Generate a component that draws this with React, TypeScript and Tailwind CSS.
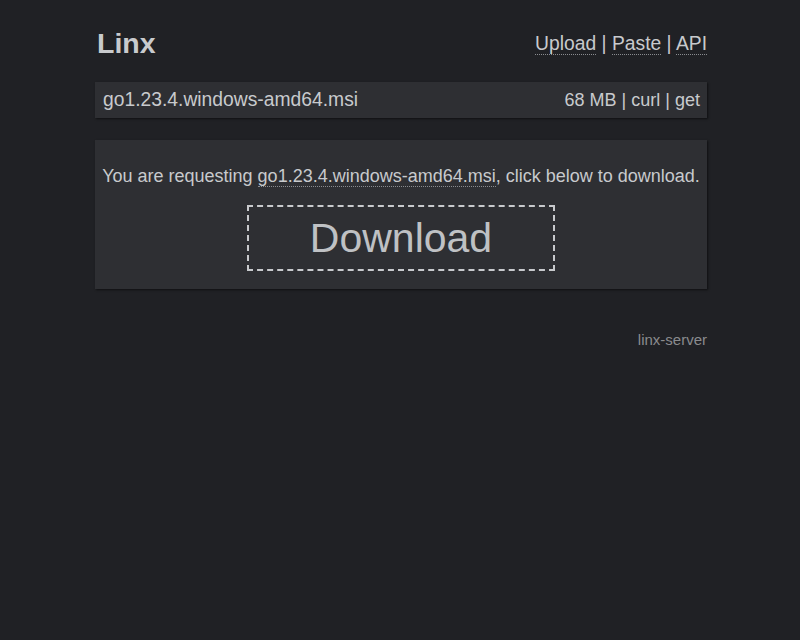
import React from 'react';

const font = { fontFamily: '"Liberation Sans", Arial, sans-serif' };

function Dotted({ children }: { children: React.ReactNode }) {
  return <a className="border-b border-dotted border-[#8a8c90] text-[#c8cacd] cursor-pointer">{children}</a>;
}

export default function App() {
  return (
    <div className="min-h-screen bg-[#202125] text-[#c8cacd]" style={font}>
      <div className="w-[612px] ml-[95px]">
        {/* Header */}
        <header className="flex items-end justify-between pt-[27px]">
          <h1 className="pl-[2px] text-[28.5px] font-bold leading-[32px] text-[#c8cacd]">Linx</h1>
          <nav className="text-[19.3px] leading-[22px] mb-[4px]">
            <Dotted>Upload</Dotted> | <Dotted>Paste</Dotted> | <Dotted>API</Dotted>
          </nav>
        </header>

        {/* File info bar */}
        <div className="mt-[23px] flex h-[36px] items-baseline justify-between bg-[#2e2f33] pl-[8px] pr-[7px] pt-[7px] leading-[22px] shadow-[1px_1px_2px_rgba(0,0,0,0.55)]">
          <span className="text-[19.3px]">go1.23.4.windows-amd64.msi</span>
          <span className="text-[18px]">68 MB | curl | get</span>
        </div>

        {/* Download panel */}
        <div className="mt-[22px] flex flex-col items-center bg-[#2e2f33] pt-[25px] pb-[18px] shadow-[1px_1px_2px_rgba(0,0,0,0.55)]">
          <p className="text-[18px] leading-[22px]">
            You are requesting <Dotted>go1.23.4.windows-amd64.msi</Dotted>, click below to download.
          </p>
          <button className="mt-[18px] flex h-[66px] w-[308px] items-center justify-center border-2 border-dashed border-[#c8cacd] text-[41px] leading-none text-[#bfc1c4]">
            Download
          </button>
        </div>

        {/* Footer */}
        <footer className="mt-[42px] text-right text-[15px] leading-[17px] text-[#8a8b8e]">linx-server</footer>
      </div>
    </div>
  );
}
